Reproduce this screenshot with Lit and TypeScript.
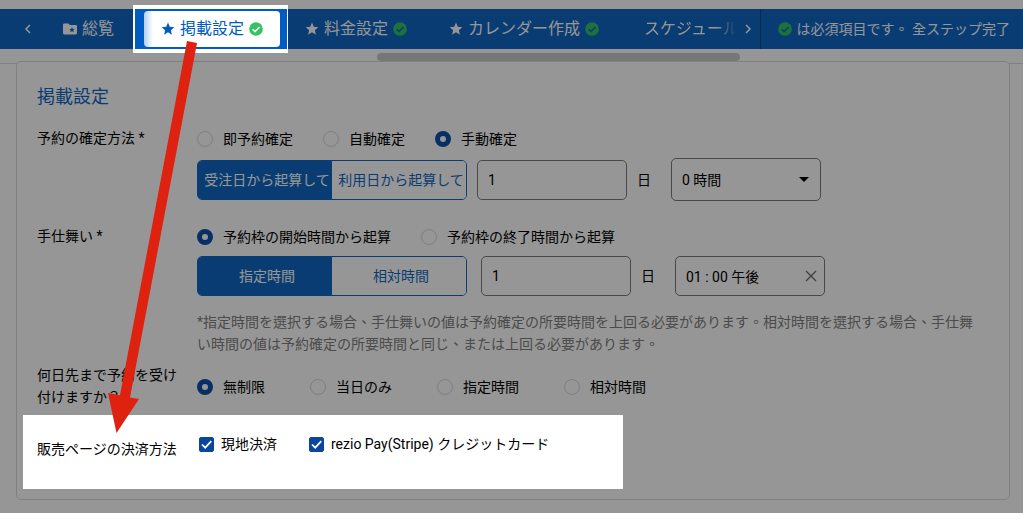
import { LitElement, html, css, svg, nothing } from "lit";
import { customElement, property } from "lit/decorators.js";

const starIcon = html`<svg class="icon" viewBox="0 0 14 14" aria-hidden="true">
  <path fill="currentColor" d="M7 .6l1.75 4.2 4.55.4-3.45 3 1.03 4.45L7 10.3l-3.88 2.35L4.15 8.2.7 5.2l4.55-.4z" />
</svg>`;

const checkIcon = html`<svg class="icon" viewBox="0 0 14 14" aria-hidden="true">
  <circle cx="7" cy="7" r="6.8" fill="#34c263" />
  <path class="tick" d="M3.6 7.2l2.4 2.4 4.6-4.7" fill="none" stroke-width="1.5" />
</svg>`;

const folderIcon = html`<svg class="icon" viewBox="0 0 14 14" aria-hidden="true">
  <path fill="currentColor" fill-rule="evenodd" d="M1.4 1.6h4l1.4 1.5h5.8c.8 0 1.4.6 1.4 1.4v6.6c0 .8-.6 1.4-1.4 1.4H1.4C.6 12.5 0 11.9 0 11.1V3c0-.8.6-1.4 1.4-1.4zM9 5l-.8 1.9-2 .15 1.55 1.3-.5 2L9 9.3l1.75 1.05-.5-2 1.55-1.3-2-.15z" />
</svg>`;

const chevron = (d: string) => html`<svg class="chevron" viewBox="0 0 8 10" aria-hidden="true">
  ${svg`<path d=${d} fill="none" stroke="currentColor" stroke-width="1.5" />`}
</svg>`;

interface Choice {
  label: string;
  checked?: boolean;
}

@customElement("radio-row")
class RadioRow extends LitElement {
  @property() name = "";
  @property() legend = "";
  @property({ attribute: false }) choices: Choice[] = [];
  @property({ type: Boolean, reflect: true }) wide = false;

  static styles = css`
    :host {
      display: block;
      --gap: 30px;
    }
    :host([wide]) {
      --gap: 45px;
    }
    .group {
      display: flex;
      flex-wrap: wrap;
      column-gap: var(--gap);
    }
    label {
      display: flex;
      align-items: center;
      gap: 10px;
      line-height: 24px;
    }
    input {
      appearance: none;
      box-sizing: border-box;
      width: 16px;
      height: 16px;
      margin: 0;
      border: 1px solid #d8d8d8;
      border-radius: 50%;
      background: #fff;
    }
    input:checked {
      border: 5px solid #0f50ab;
    }
  `;

  render() {
    return html`<div class="group" role="radiogroup" aria-label=${this.legend}>
      ${this.choices.map(
        (c) => html`<label><input type="radio" name=${this.name} .checked=${!!c.checked} />${c.label}</label>`
      )}
    </div>`;
  }
}

@customElement("app-root")
class AppRoot extends LitElement {
  static styles = css`
    :host {
      display: block;
      position: relative;
      min-height: 100vh;
      box-sizing: border-box;
      padding-top: 9px;
      overflow: hidden;
      background: #fff;
      color: #000;
      font: 14px/22px Roboto, "Noto Sans CJK TC", sans-serif;
    }
    button,
    input,
    select {
      box-sizing: border-box;
      margin: 0;
      font: inherit;
      color: inherit;
    }
    .bar {
      display: flex;
      height: 40px;
      background: #1067c4;
      color: #fff;
      --tick: #1067c4;
    }
    .arrow {
      display: grid;
      place-items: center;
      flex: none;
      padding: 0;
      border: 0;
      background: none;
      color: inherit;
    }
    .prev {
      width: 46px;
      padding-left: 10px;
    }
    .next {
      width: 24px;
    }
    .chevron {
      width: 8px;
      height: 10px;
    }
    .icon {
      width: 14px;
      height: 14px;
      flex: none;
    }
    .tick {
      stroke: var(--tick, #fff);
    }
    .tabs {
      display: flex;
      flex: 1;
      min-width: 0;
      align-items: center;
    }
    .tab {
      display: flex;
      align-items: center;
      flex: none;
      gap: 5px;
      height: 36px;
      box-sizing: border-box;
      padding: 0 17px;
      border-radius: 4px;
      font-size: 16px;
      line-height: 36px;
      color: inherit;
      text-decoration: none;
      white-space: nowrap;
    }
    .tab + .tab {
      margin-left: 8px;
    }
    .tab.last {
      flex: 1;
      min-width: 0;
      padding: 0 0 0 20px;
      mask-image: linear-gradient(to left, transparent, #000 20px);
    }
    .focus-tab {
      position: relative;
      z-index: 2;
      flex: none;
      margin-left: 2px;
      padding: 2px 7px 2px 9px;
      border: solid #fff;
      border-width: 4px 1px 4px 2px;
      background: #005bc2;
      --tick: #fff;
    }
    .focus-tab .tab {
      background: linear-gradient(to right, #b4cfee, #fff 9px);
      color: #005bc2;
    }
    .status {
      display: flex;
      align-items: center;
      flex: none;
      gap: 5px;
      padding: 0 13px 0 17px;
      border-left: 1px solid #08498f;
      white-space: nowrap;
    }
    .track {
      height: 10px;
      padding: 4px 0 0;
      border-bottom: 1px solid #dcdcdc;
    }
    .thumb {
      width: 363px;
      max-width: 50%;
      height: 8px;
      margin-left: 377px;
      border-radius: 4px;
      background: #cacaca;
    }
    .card {
      margin: -3px 13px 13px 16px;
      padding: 23px 20px 10px;
      border: 1px solid #dadada;
      border-radius: 5px;
      background: #fff;
    }
    h1 {
      margin: 0 0 18px;
      font-size: 18px;
      font-weight: 400;
      line-height: 24px;
      color: #1067c4;
    }
    .row {
      display: grid;
      grid-template-columns: 140px minmax(0, 1fr);
      column-gap: 20px;
    }
    .row.first {
      margin-bottom: 24px;
    }
    .row.limit {
      align-items: end;
      margin: 9px 0 7px;
    }
    .row.limit radio-row {
      padding-bottom: 9px;
    }
    .controls {
      display: flex;
      align-items: center;
      gap: 10px;
      margin-top: 7px;
    }
    .segment {
      display: grid;
      grid-template-columns: 1fr 1fr;
      width: 270px;
      height: 40px;
      box-sizing: border-box;
      border: 1px solid #1067c4;
      border-radius: 5px;
      overflow: hidden;
    }
    .segment button {
      padding: 0 0 0 4px;
      border: 0;
      background: #fff;
      color: #1067c4;
      white-space: nowrap;
    }
    .segment .on {
      background: #1067c4;
      color: #fff;
    }
    .second .segment {
      margin-right: 4px;
    }
    .field {
      width: 150px;
      height: 40px;
      padding: 0 10px;
      border: 1px solid #7c7c7c;
      border-radius: 5px;
      background: #fff;
    }
    .unit {
      margin-right: 10px;
    }
    .select,
    .time {
      position: relative;
      display: flex;
      align-items: center;
    }
    .select select {
      appearance: none;
      height: 43px;
    }
    .caret {
      position: absolute;
      right: 12px;
      width: 10px;
      height: 5px;
      pointer-events: none;
    }
    .clear {
      position: absolute;
      right: 8px;
      display: grid;
      padding: 0;
      border: 0;
      background: none;
      color: #6c6c6c;
    }
    .clear svg {
      width: 12px;
      height: 12px;
    }
    .hint {
      margin: 15px 10px 0 0;
      color: #808080;
    }
    .payment {
      position: relative;
      z-index: 2;
      display: flex;
      align-items: flex-start;
      gap: 22px;
      box-sizing: border-box;
      max-width: 600px;
      min-height: 74px;
      margin-left: -14px;
      padding: 18px 14px;
      background: #fff;
    }
    .payment .name {
      width: 140px;
      padding-top: 5px;
    }
    .checks {
      display: flex;
      gap: 32px;
    }
    .checks label {
      display: flex;
      align-items: center;
      gap: 7px;
    }
    .box {
      display: grid;
    }
    .box input,
    .box svg {
      grid-area: 1 / 1;
      width: 15px;
      height: 15px;
    }
    .box svg {
      pointer-events: none;
    }
    .box input {
      appearance: none;
      border: 1px solid #0a469f;
      border-radius: 2px;
    }
    .box input:checked {
      background: #0a469f;
    }
    .shade {
      position: absolute;
      inset: 0;
      z-index: 1;
      background: rgba(0, 0, 0, 0.41);
      pointer-events: none;
    }
    .pointer {
      position: absolute;
      z-index: 3;
      left: 100px;
      top: 35px;
      width: 110px;
      height: 405px;
      pointer-events: none;
    }
  `;

  private tab(label: string, icon: unknown, done: boolean, extra = "") {
    return html`<a class="tab ${extra}" href="#">${icon}<span>${label}</span>${done ? checkIcon : nothing}</a>`;
  }

  private segment(a: string, b: string) {
    return html`<div class="segment">
      <button type="button" class="on" aria-pressed="true">${a}</button>
      <button type="button" aria-pressed="false">${b}</button>
    </div>`;
  }

  private check(label: string) {
    return html`<label>
      <span class="box">
        <input type="checkbox" checked />
        <svg viewBox="0 0 15 15" aria-hidden="true"><path d="M3 7.5l3.2 3.2L12.3 4.2" fill="none" stroke="#fff" stroke-width="1.7" /></svg>
      </span>${label}</label>`;
  }

  render() {
    return html`
      <nav class="bar">
        <button class="arrow prev" type="button" aria-label="前へ">${chevron("M6 1L2 5l4 4")}</button>
        <div class="tabs">
          ${this.tab("総覧", folderIcon, false)}
          <div class="focus-tab">${this.tab("掲載設定", starIcon, true)}</div>
          ${this.tab("料金設定", starIcon, true)}
          ${this.tab("カレンダー作成", starIcon, true)}
          ${this.tab("スケジュール", nothing, false, "last")}
        </div>
        <button class="arrow next" type="button" aria-label="次へ">${chevron("M2 1l4 4-4 4")}</button>
        <div class="status">${checkIcon}<span>は必須項目です。 全ステップ完了</span></div>
      </nav>
      <div class="track"><div class="thumb"></div></div>

      <main class="card">
        <h1>掲載設定</h1>

        <section class="row first">
          <div>予約の確定方法 *</div>
          <div>
            <radio-row name="confirm" legend="予約の確定方法"
              .choices=${[{ label: "即予約確定" }, { label: "自動確定" }, { label: "手動確定", checked: true }]}></radio-row>
            <div class="controls">
              ${this.segment("受注日から起算して", "利用日から起算して")}
              <input class="field" id="days-a" type="text" value="1" />
              <label class="unit" for="days-a">日</label>
              <div class="select">
                <select class="field" aria-label="時間"><option>0 時間</option></select>
                <svg class="caret" viewBox="0 0 10 5" aria-hidden="true"><path d="M0 0h10L5 5z" /></svg>
              </div>
            </div>
          </div>
        </section>

        <section class="row second">
          <div>手仕舞い *</div>
          <div>
            <radio-row name="close" legend="手仕舞い"
              .choices=${[{ label: "予約枠の開始時間から起算", checked: true }, { label: "予約枠の終了時間から起算" }]}></radio-row>
            <div class="controls">
              ${this.segment("指定時間", "相対時間")}
              <input class="field" id="days-b" type="text" value="1" />
              <label class="unit" for="days-b">日</label>
              <div class="time">
                <input class="field" type="text" aria-label="時刻" value="01 : 00 午後" />
                <button class="clear" type="button" aria-label="クリア">
                  <svg viewBox="0 0 12 12" aria-hidden="true"><path d="M1 1l10 10M11 1L1 11" stroke="currentColor" stroke-width="1.3" /></svg>
                </button>
              </div>
            </div>
            <p class="hint">*指定時間を選択する場合、手仕舞いの値は予約確定の所要時間を上回る必要があります。相対時間を選択する場合、手仕舞い時間の値は予約確定の所要時間と同じ、または上回る必要があります。</p>
          </div>
        </section>

        <section class="row limit">
          <div>何日先まで予約を受け付けますか？ *</div>
          <radio-row wide name="limit" legend="何日先まで予約を受け付けますか？"
            .choices=${[{ label: "無制限", checked: true }, { label: "当日のみ" }, { label: "指定時間" }, { label: "相対時間" }]}></radio-row>
        </section>

        <section class="payment">
          <div class="name">販売ページの決済方法</div>
          <div class="checks">${this.check("現地決済")}${this.check("rezio Pay(Stripe) クレジットカード")}</div>
        </section>
      </main>

      <div class="shade"></div>
      <svg class="pointer" viewBox="100 35 110 405" aria-hidden="true">
        <path fill="#df210f" d="M187 41l10 2-67 354.5 9 1.5-22.5 34L108 393l12 2.2z" />
      </svg>
    `;
  }
}
